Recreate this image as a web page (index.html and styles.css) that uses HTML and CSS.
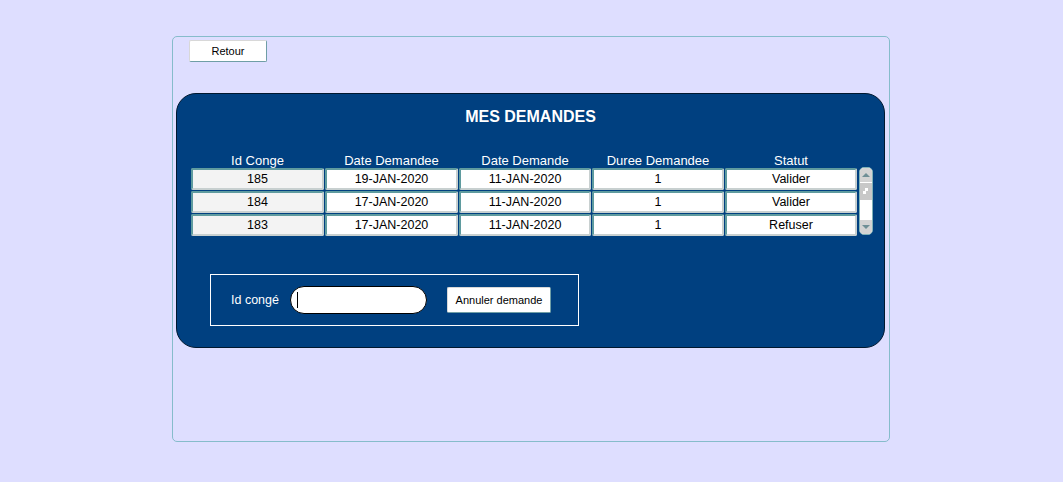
FILE: index.html
```html
<!DOCTYPE html>
<html>
<head>
<meta charset="utf-8">
<link rel="stylesheet" href="styles.css">
</head>
<body>
<div class="frame">
  <div class="topbar"><button class="btn btn-retour">Retour</button></div>
  <div class="panel">
    <h1 class="title">MES DEMANDES</h1>
    <div class="table-wrap">
      <div class="table">
        <div class="th">Id Conge</div>
        <div class="th">Date Demandee</div>
        <div class="th">Date Demande</div>
        <div class="th">Duree Demandee</div>
        <div class="th">Statut</div>

        <div class="td grey">185</div>
        <div class="td">19-JAN-2020</div>
        <div class="td">11-JAN-2020</div>
        <div class="td">1</div>
        <div class="td">Valider</div>

        <div class="td grey">184</div>
        <div class="td">17-JAN-2020</div>
        <div class="td">11-JAN-2020</div>
        <div class="td">1</div>
        <div class="td">Valider</div>

        <div class="td grey">183</div>
        <div class="td">17-JAN-2020</div>
        <div class="td">11-JAN-2020</div>
        <div class="td">1</div>
        <div class="td">Refuser</div>
      </div>
      <div class="scrollbar">
        <div class="sb-btn sb-up"><svg width="10" height="6" viewBox="0 0 10 6"><path d="M1 5 L5 1 L9 5 Z" fill="#6f8f96"/></svg></div>
        <div class="sb-thumb"><span class="grip"></span></div>
        <div class="sb-track"></div>
        <div class="sb-btn sb-down"><svg width="10" height="6" viewBox="0 0 10 6"><path d="M1 1 L5 5 L9 1 Z" fill="#6f8f96"/></svg></div>
      </div>
    </div>
    <div class="form-box">
      <label class="lbl">Id congé</label>
      <div class="input"><span class="caret"></span></div>
      <button class="btn btn-annuler">Annuler demande</button>
    </div>
  </div>
</div>
</body>
</html>
```

FILE: styles.css
```css
html, body {
  margin: 0;
  padding: 0;
}
body {
  background: #dedeff;
  font-family: "Liberation Sans", Arial, sans-serif;
  width: 1063px;
  height: 482px;
  overflow: hidden;
}
.frame {
  box-sizing: border-box;
  margin: 36px 0 0 172px;
  width: 718px;
  height: 406px;
  border: 1px solid #86bccb;
  border-radius: 5px;
  padding: 3px 3px 0 3px;
}
.topbar {
  display: flex;
  padding-left: 13px;
  height: 53px;
}
.btn {
  font-family: "Liberation Sans", Arial, sans-serif;
  background: #fff;
  color: #000;
  border: 1px solid #d8d8d8;
  border-right-color: #6f9ea6;
  border-bottom-color: #6f9ea6;
  border-radius: 2px;
  padding: 0;
  cursor: default;
}
.btn-retour {
  width: 78px;
  height: 22px;
  font-size: 11px;
}
.panel {
  box-sizing: border-box;
  width: 709px;
  height: 255px;
  background: #004080;
  border: 1px solid #00182f;
  border-radius: 20px;
  display: flex;
  flex-direction: column;
  padding: 13px 0 0 14px;
}
.title {
  margin: 0;
  color: #fff;
  font-size: 16px;
  font-weight: bold;
  text-align: center;
  line-height: 20px;
  padding-right: 14px;
}
.table-wrap {
  display: flex;
  margin-top: 25px;
  gap: 2px;
}
.table {
  display: grid;
  grid-template-columns: 133px 133px 132px 132px 132px;
  grid-auto-rows: 22px;
  grid-template-rows: 15px;
  column-gap: 1px;
  row-gap: 1px;
}
.th {
  color: #fff;
  font-size: 13px;
  text-align: center;
  line-height: 14px;
  padding-top: 2px;
}
.td {
  box-sizing: border-box;
  background: #fff;
  border: 2px solid #c8d0d0;
  border-top-color: #5f9b9f;
  border-left-color: #5f9b9f;
  border-radius: 2px;
  font-size: 12.5px;
  line-height: 19px;
  text-align: center;
  color: #000;
}
.td.grey {
  background: #f3f3f3;
}
.scrollbar {
  box-sizing: border-box;
  margin-top: 15px;
  width: 14px;
  height: 68px;
  border: 1px solid #7fb2b8;
  border-radius: 5px;
  background: #fff;
  display: flex;
  flex-direction: column;
  overflow: hidden;
}
.sb-btn {
  height: 14px;
  background: #d3d3d3;
  display: flex;
  align-items: center;
  justify-content: center;
}
.sb-thumb {
  height: 17px;
  margin-top: 1px;
  background: #c8c8c8;
  position: relative;
}
.grip {
  position: absolute;
  left: 5px;
  top: 5px;
  width: 3px;
  height: 3px;
  background: #fff;
  box-shadow: -2px 3px 0 #fff;
}
.sb-track {
  flex: 1;
}
.form-box {
  box-sizing: border-box;
  margin: 38px 0 0 19px;
  width: 369px;
  height: 52px;
  border: 1px solid #fff;
  display: flex;
  align-items: flex-start;
  padding: 11px 0 0 20px;
}
.lbl {
  color: #fff;
  font-size: 12.5px;
  width: 59px;
  line-height: 24px;
  padding-top: 2px;
}
.input {
  box-sizing: border-box;
  width: 137px;
  height: 28px;
  background: #fff;
  border: 1px solid #000;
  border-radius: 14px;
  display: flex;
  align-items: center;
  padding-left: 6px;
}
.caret {
  width: 1px;
  height: 16px;
  background: #000;
}
.btn-annuler {
  margin: 1px 0 0 20px;
  width: 104px;
  height: 26px;
  font-size: 11px;
}
```
